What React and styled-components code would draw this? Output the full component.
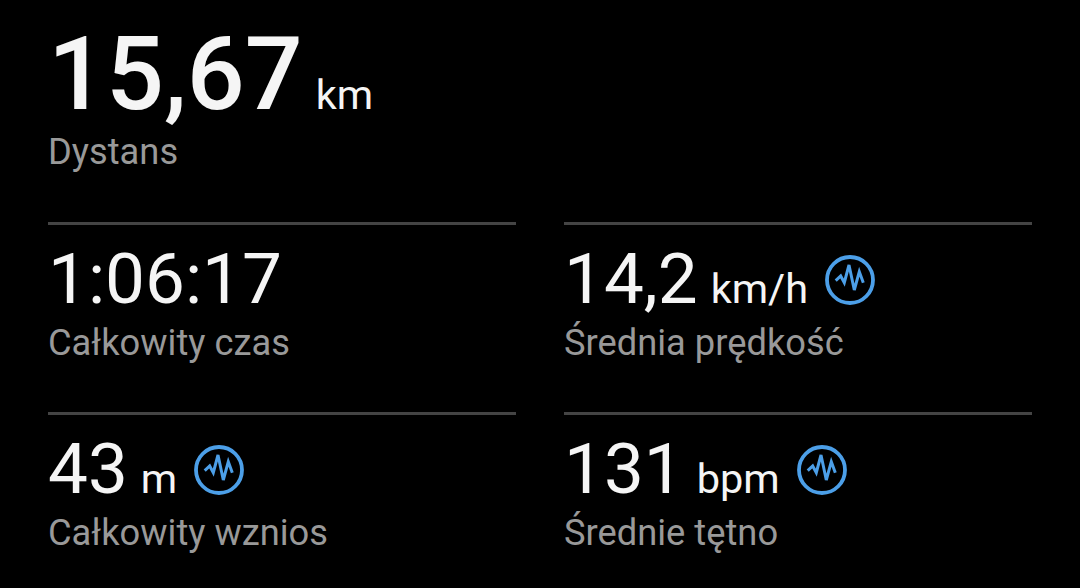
import React from 'react';
import styled, { createGlobalStyle } from 'styled-components';

const Global = createGlobalStyle`
  html, body { margin: 0; padding: 0; background: #000; }
  body { font-family: Roboto, "Liberation Sans", sans-serif; }
`;

const Page = styled.main`
  width: 1080px;
  height: 588px;
  box-sizing: border-box;
  background: #000;
  padding: 18px 48px 0;
  overflow: hidden;
`;

const Hero = styled.section`
  height: 204px;
`;

const Grid = styled.div`
  display: grid;
  grid-template-columns: 468px 468px;
  column-gap: 48px;
  grid-auto-rows: 190px;
`;

const Cell = styled.section`
  border-top: 3px solid #444;
  box-sizing: border-box;
`;

const ValueRow = styled.div`
  display: flex;
  align-items: baseline;
  height: ${p => (p.$hero ? 112 : 84)}px;
  padding-top: ${p => (p.$hero ? 0 : 12)}px;
  line-height: 1;
`;

const Value = styled.span`
  color: #f5f5f5;
  font-size: ${p => (p.$hero ? 102 : 71)}px;
  font-weight: ${p => (p.$hero ? 500 : 400)};
  line-height: ${p => (p.$hero ? 112 : 84)}px;
`;

const Unit = styled.span`
  color: #f5f5f5;
  font-size: 41.5px;
  margin-left: 13px;
`;

const Label = styled.div`
  color: #999;
  font-size: 36.3px;
  line-height: 44px;
`;

const BadgeSvg = styled.svg`
  width: 52px;
  height: 52px;
  margin-left: 16px;
  align-self: flex-start;
  margin-top: 17px;
  flex: none;
`;

const Badge = () => (
  <BadgeSvg viewBox="-1 -1 52 52" fill="none" stroke="#4c9fe8">
    <circle cx="25" cy="25" r="23" strokeWidth="3.8" />
    <path d="M10.7 25.7 15.7 21 19.3 27.7 24 10 29.3 35 34.3 16.7 38.3 27.7" strokeWidth="3" strokeLinejoin="miter" />
  </BadgeSvg>
);

const Stat = ({ value, unit, label, badge }) => (
  <Cell>
    <ValueRow>
      <Value>{value}</Value>
      {unit && <Unit>{unit}</Unit>}
      {badge && <Badge />}
    </ValueRow>
    <Label>{label}</Label>
  </Cell>
);

export default function App() {
  return (
    <Page>
      <Global />
      <Hero>
        <ValueRow $hero>
          <Value $hero>15,67</Value>
          <Unit>km</Unit>
        </ValueRow>
        <Label>Dystans</Label>
      </Hero>
      <Grid>
        <Stat value="1:06:17" label="Całkowity czas" />
        <Stat value="14,2" unit="km/h" label="Średnia prędkość" badge />
        <Stat value="43" unit="m" label="Całkowity wznios" badge />
        <Stat value="131" unit="bpm" label="Średnie tętno" badge />
      </Grid>
    </Page>
  );
}
